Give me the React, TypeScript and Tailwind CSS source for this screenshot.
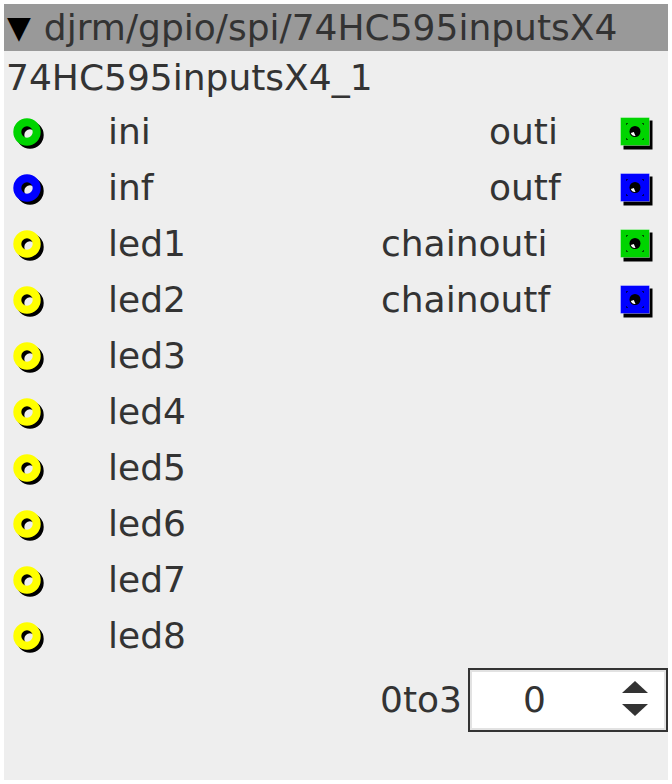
import React from "react";

type Kind = "int" | "float" | "bool";

const colors: Record<Kind, string> = {
  int: "#00d400",
  float: "#0000ff",
  bool: "#ffff00",
};

const InPort: React.FC<{ kind: Kind }> = ({ kind }) => (
  <svg width="38" height="38" viewBox="0 0 38 38" className="shrink-0">
    <circle cx="22" cy="22" r="9.7" fill="none" stroke="#000" strokeWidth="8" />
    <circle cx="19" cy="19" r="9.7" fill="none" stroke={colors[kind]} strokeWidth="8" />
  </svg>
);

const OutPort: React.FC<{ kind: Kind }> = ({ kind }) => (
  <svg width="38" height="38" viewBox="0 0 38 38" className="shrink-0">
    <rect x="7.5" y="7.5" width="29" height="29" fill="#000" />
    <rect x="4.5" y="4.5" width="29" height="28" fill={colors[kind]} />
    <rect x="4.5" y="4.5" width="29" height="28" fill="none" stroke="#ffffff" strokeOpacity="0.35" strokeWidth="1" />
    <g fill="#000" opacity="0.6">
      <rect x="10" y="10" width="2" height="1" />
      <rect x="10" y="10" width="1" height="2" />
      <rect x="26" y="10" width="2" height="1" />
      <rect x="27" y="10" width="1" height="2" />
      <rect x="10" y="26" width="2" height="1" />
      <rect x="10" y="25" width="1" height="2" />
      <rect x="26" y="26" width="2" height="1" />
      <rect x="27" y="25" width="1" height="2" />
    </g>
    <circle cx="19" cy="18.5" r="5.5" fill="#000" />
    <path d="M14.8 20 A4.6 4.6 0 0 0 19.5 23 L17.8 19 Z" fill="#fff" />
  </svg>
);

const inputs: { name: string; kind: Kind }[] = [
  { name: "ini", kind: "int" },
  { name: "inf", kind: "float" },
  { name: "led1", kind: "bool" },
  { name: "led2", kind: "bool" },
  { name: "led3", kind: "bool" },
  { name: "led4", kind: "bool" },
  { name: "led5", kind: "bool" },
  { name: "led6", kind: "bool" },
  { name: "led7", kind: "bool" },
  { name: "led8", kind: "bool" },
];

const outputs: { name: string; kind: Kind; pad: string }[] = [
  { name: "outi", kind: "int", pad: "pl-[108px]" },
  { name: "outf", kind: "float", pad: "pl-[108px]" },
  { name: "chainouti", kind: "int", pad: "pl-0" },
  { name: "chainoutf", kind: "float", pad: "pl-0" },
];

export default function App() {
  return (
    <div
      className="w-[672px] h-[784px] bg-white p-1 text-[#333333]"
      style={{ fontFamily: "'DejaVu Sans', sans-serif" }}
    >
      <div className="h-[776px] bg-[#eeeeee] flex flex-col">
        <div className="h-[47px] bg-[#999999] flex items-center pl-[3px] text-[36px] leading-none whitespace-nowrap">
          <span className="text-black text-[31px] mr-[13px]">▼</span>
          <span>djrm/gpio/spi/74HC595inputsX4</span>
        </div>
        <div className="h-[53px] flex items-center pl-[2px] text-[36px] leading-none">
          74HC595inputsX4_1
        </div>

        {inputs.map((inp, i) => {
          const out = outputs[i];
          return (
            <div key={inp.name} className="h-[56px] flex items-center text-[36px] leading-none">
              <div className="flex items-center w-[377px] pl-[4px]">
                <InPort kind={inp.kind} />
                <span className="ml-[62px]">{inp.name}</span>
              </div>
              {out && (
                <div className="flex-1 flex items-center">
                  <span className={`flex-1 ${out.pad}`}>{out.name}</span>
                  <span className="mr-[14px]">
                    <OutPort kind={out.kind} />
                  </span>
                </div>
              )}
            </div>
          );
        })}

        <div className="mt-[4px] flex items-center justify-end text-[36px] leading-none">
          <span className="mr-[6px]">0to3</span>
          <div className="w-[200px] h-[64px] border-2 border-[#333333] bg-white flex">
            <div className="flex-1 border-2 border-[#e2e2e2] flex items-center">
              <span className="flex-1 text-center pr-[24px]">0</span>
              <svg width="28" height="40" viewBox="0 0 28 40" className="mr-[15px]">
                <polygon points="1,13 14,1 27,13" fill="#333333" />
                <polygon points="1,24 27,24 14,36" fill="#333333" />
              </svg>
            </div>
          </div>
        </div>
      </div>
    </div>
  );
}
